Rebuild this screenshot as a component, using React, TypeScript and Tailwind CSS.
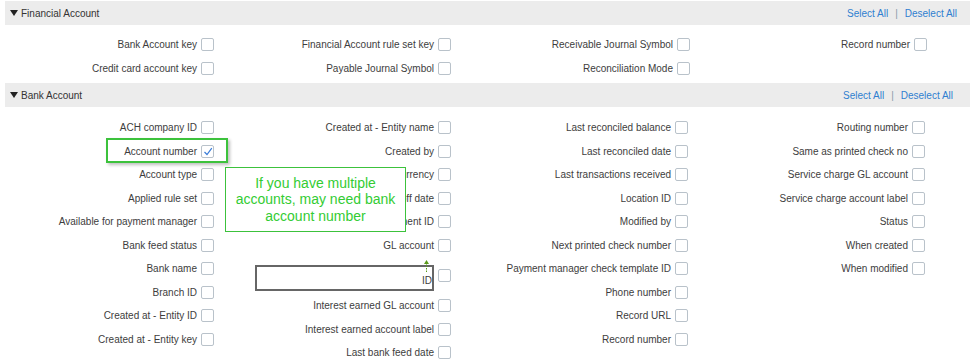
import type { ReactNode } from "react";

const FONT = { fontFamily: '"Liberation Sans", Arial, sans-serif' };

type Item = { label: string; checked?: boolean };

const financialCols: Item[][] = [
  [{ label: "Bank Account key" }, { label: "Credit card account key" }],
  [{ label: "Financial Account rule set key" }, { label: "Payable Journal Symbol" }],
  [{ label: "Receivable Journal Symbol" }, { label: "Reconciliation Mode" }],
  [{ label: "Record number" }],
];

const bankCol1: Item[] = [
  { label: "ACH company ID" },
  { label: "Account number", checked: true },
  { label: "Account type" },
  { label: "Applied rule set" },
  { label: "Available for payment manager" },
  { label: "Bank feed status" },
  { label: "Bank name" },
  { label: "Branch ID" },
  { label: "Created at - Entity ID" },
  { label: "Created at - Entity key" },
];

const bankCol2Top: Item[] = [
  { label: "Created at - Entity name" },
  { label: "Created by" },
  { label: "Currency" },
  { label: "Cutoff date" },
  { label: "Department ID" },
  { label: "GL account" },
];

const bankCol2Bottom: Item[] = [
  { label: "Interest earned GL account" },
  { label: "Interest earned account label" },
  { label: "Last bank feed date" },
];

const bankCol3: Item[] = [
  { label: "Last reconciled balance" },
  { label: "Last reconciled date" },
  { label: "Last transactions received" },
  { label: "Location ID" },
  { label: "Modified by" },
  { label: "Next printed check number" },
  { label: "Payment manager check template ID" },
  { label: "Phone number" },
  { label: "Record URL" },
  { label: "Record number" },
];

const bankCol4: Item[] = [
  { label: "Routing number" },
  { label: "Same as printed check no" },
  { label: "Service charge GL account" },
  { label: "Service charge account label" },
  { label: "Status" },
  { label: "When created" },
  { label: "When modified" },
];

function Checkbox({ checked }: { checked?: boolean }) {
  return (
    <span className="flex h-[13px] w-[13px] shrink-0 items-center justify-center rounded-[2px] border border-[#b9c2ca] bg-white">
      {checked && (
        <svg width="10" height="9" viewBox="0 0 10 9">
          <path d="M1.5 5 L4 7.5 L8.8 1.2" fill="none" stroke="#3b7dd8" strokeWidth="1.2" />
        </svg>
      )}
    </span>
  );
}

function Row({ item }: { item: Item }) {
  return (
    <div className="flex h-[23.5px] items-center justify-end gap-[4px]">
      <span className="whitespace-nowrap text-[10px] text-[#3d3d3d]">{item.label}</span>
      <Checkbox checked={item.checked} />
    </div>
  );
}

function Column({ width, children }: { width: string; children: ReactNode }) {
  return <div className={"flex shrink-0 flex-col " + width}>{children}</div>;
}

function SectionHeader({ title, pr }: { title: string; pr: string }) {
  return (
    <div className={"mx-[5px] flex h-[24px] items-center justify-between bg-[#ececec] pl-[5px] " + pr}>
      <div className="flex items-center gap-[3px] text-[10px] text-[#333]">
        <svg width="8" height="6" viewBox="0 0 8 6">
          <path d="M0 0 H8 L4 6 Z" fill="#222" />
        </svg>
        <span>{title}</span>
      </div>
      <div className="flex items-center gap-[7px] text-[10px] text-[#2f7fd0]">
        <span>Select All</span>
        <span className="text-[#8a9aa8]">|</span>
        <span>Deselect All</span>
      </div>
    </div>
  );
}

export default function App() {
  return (
    <div className="h-[364px] w-[975px] overflow-hidden bg-white pt-[1px]" style={FONT}>
      <SectionHeader title="Financial Account" pr="pr-[13px]" />

      {/* Financial Account fields */}
      <div className="flex pb-[3px] pt-[8px]">
        <Column width="w-[214px]">
          {financialCols[0].map((i) => <Row key={i.label} item={i} />)}
        </Column>
        <Column width="w-[237px]">
          {financialCols[1].map((i) => <Row key={i.label} item={i} />)}
        </Column>
        <Column width="w-[239px]">
          {financialCols[2].map((i) => <Row key={i.label} item={i} />)}
        </Column>
        <Column width="w-[237px]">
          {financialCols[3].map((i) => <Row key={i.label} item={i} />)}
        </Column>
      </div>

      <SectionHeader title="Bank Account" pr="pr-[17px]" />

      {/* Bank Account fields */}
      <div className="relative flex pt-[9px]">
        <Column width="w-[214px]">
          {bankCol1.map((i) => <Row key={i.label} item={i} />)}
        </Column>
        <Column width="w-[237px]">
          {bankCol2Top.map((i) => <Row key={i.label} item={i} />)}
          <div className="flex h-[37px] items-center justify-end gap-[4px]">
            <div className="relative mt-[4px] h-[26px] w-[179px] border-2 border-[#666] bg-white">
              <svg className="absolute -top-[7px] right-[3px]" width="5" height="12" viewBox="0 0 5 12">
                <path d="M2.5 0 L5 4 H0 Z" fill="#5a9a1a" />
                <path d="M2.5 3 V12" stroke="#5a9a1a" strokeWidth="1" strokeDasharray="1.5 1" />
              </svg>
              <span className="absolute bottom-[1px] right-0 text-[10px] text-[#3d3d3d]">ID</span>
            </div>
            <Checkbox />
          </div>
          {bankCol2Bottom.map((i) => <Row key={i.label} item={i} />)}
        </Column>
        <Column width="w-[237px]">
          {bankCol3.map((i) => <Row key={i.label} item={i} />)}
        </Column>
        <Column width="w-[237px]">
          {bankCol4.map((i) => <Row key={i.label} item={i} />)}
        </Column>

        {/* highlight around Account number */}
        <div className="absolute left-[106px] top-[31px] h-[25px] w-[122px] border-2 border-[#3cc23c] shadow-[2px_2px_3px_rgba(0,0,0,0.25)]" />

        {/* callout */}
        <div className="absolute left-[225px] top-[60px] flex h-[65px] w-[181px] flex-col items-center justify-center border border-[#3cc23c] bg-white text-center text-[14px] leading-[16.5px] text-[#33cc33]">
          <span>If you have multiple</span>
          <span>accounts, may need bank</span>
          <span>account number</span>
        </div>
      </div>
    </div>
  );
}
